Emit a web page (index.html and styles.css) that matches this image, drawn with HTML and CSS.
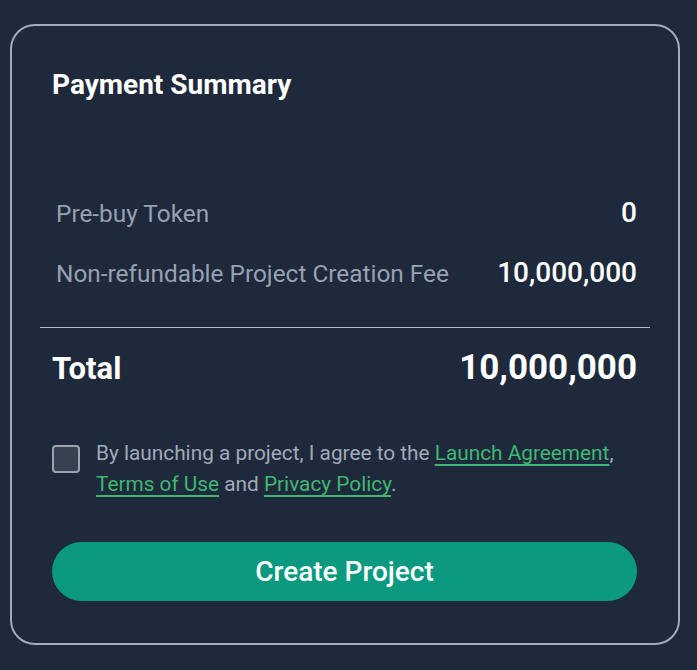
FILE: index.html
```html
<!DOCTYPE html>
<html lang="en">
<head>
    <meta charset="UTF-8">
    <meta name="viewport" content="width=device-width, initial-scale=1.0">
    <title>Payment Summary</title>
    <link rel="stylesheet" href="styles.css">
</head>
<body>
    <div class="summary-card">
        <h2 class="summary-title">Payment Summary</h2>

        <div class="fee-list">
            <div class="fee-row">
                <span class="fee-label">Pre-buy Token</span>
                <span class="fee-value">0</span>
            </div>
            <div class="fee-row">
                <span class="fee-label">Non-refundable Project Creation Fee</span>
                <span class="fee-value">10,000,000</span>
            </div>
        </div>

        <hr class="divider">

        <div class="total-row">
            <span class="total-label">Total</span>
            <span class="total-value">10,000,000</span>
        </div>

        <label class="agree">
            <input type="checkbox" class="agree-box">
            <span class="agree-text">By launching a project, I agree to the <a href="#">Launch Agreement</a>, <a href="#">Terms of Use</a> and <a href="#">Privacy Policy</a>.</span>
        </label>

        <button class="create-btn">Create Project</button>
    </div>
</body>
</html>
```

FILE: styles.css
```css
body {
    margin: 0;
    background-color: #1e293b;
    font-family: Roboto, "Noto Sans", sans-serif;
    color: #ffffff;
}
.summary-card {
    box-sizing: border-box;
    width: 670px;
    margin: 24px 0 0 10px;
    padding: 43px 41px 42px 40px;
    border: 2px solid #a3abb8;
    border-radius: 25px;
}
.summary-title {
    margin: 0;
    font-size: 28px;
    line-height: 32px;
    font-weight: 700;
}
.fee-list {
    margin-top: 97px;
    padding-left: 4px;
    display: flex;
    flex-direction: column;
    gap: 29px;
}
.fee-row {
    display: flex;
    justify-content: space-between;
    align-items: baseline;
    line-height: 30px;
}
.fee-label {
    font-size: 24.4px;
    color: #96a1b1;
}
.fee-value {
    font-size: 28px;
    font-weight: 500;
}
.divider {
    margin: 38px -13px 0 -12px;
    border: none;
    border-top: 1.5px solid #b4bcc8;
}
.total-row {
    margin-top: 20px;
    display: flex;
    justify-content: space-between;
    align-items: baseline;
    line-height: 40px;
    font-weight: 700;
}
.total-label {
    font-size: 31px;
}
.total-value {
    font-size: 35px;
}
.agree {
    margin-top: 49px;
    display: flex;
    align-items: flex-start;
    gap: 16px;
}
.agree-box {
    appearance: none;
    flex: none;
    width: 28px;
    height: 28px;
    margin: 7px 0 0 0;
    background: #374151;
    border: 2px solid #9ca3af;
    border-radius: 4px;
    box-sizing: border-box;
}
.agree-text {
    font-size: 20.8px;
    line-height: 31px;
    color: #a1aab8;
}
.agree-text a {
    color: #3fb872;
    text-decoration: underline;
    text-underline-offset: 4px;
    text-decoration-thickness: 2px;
}
.create-btn {
    display: block;
    width: 100%;
    height: 59px;
    margin-top: 42px;
    border: none;
    border-radius: 30px;
    background: #0b9a7f;
    color: #ffffff;
    font-family: Roboto, "Noto Sans", sans-serif;
    font-size: 28px;
    font-weight: 500;
    cursor: pointer;
}
```
